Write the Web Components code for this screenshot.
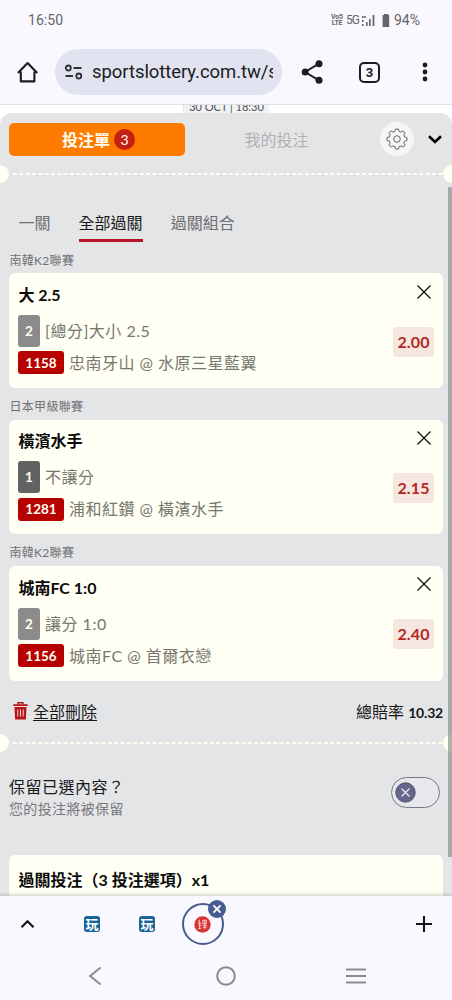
<!DOCTYPE html>
<html lang="zh-Hant">
<head>
<meta charset="utf-8">
<title>投注單</title>
<style>
html,body{margin:0;padding:0;height:1000px;overflow:hidden}
body{font-family:Lato,"Noto Sans CJK TC",sans-serif;background:#f9f8fe}
</style>
</head>
<body>
<phone-screen></phone-screen>
<script>
const define = (name, html) => customElements.define(name, class extends HTMLElement {
  constructor() {
    super();
    this.attachShadow({mode: 'open'}).innerHTML = '<style>*{box-sizing:border-box}svg{display:block;flex:none}</style>' + html;
  }
});

define('status-bar', `
<style>
:host{display:flex;height:40px;padding:0 32px 0 28px;align-items:center;justify-content:space-between;font:14px Roboto,sans-serif;color:#66656c}
.t{letter-spacing:.05px}
.r{display:flex;align-items:center}
.v{font-size:7px;line-height:6.5px;font-weight:700;width:12px;text-align:center;letter-spacing:-.2px}
.g{font-size:12px;margin-left:3px;width:14px;letter-spacing:-.9px}
.p{margin-left:4px;letter-spacing:0}
</style>
<span class="t">16:50</span>
<div class="r"><div class="v">Vo5<br>LTE</div><span class="g">5G</span>
<svg width="15" height="13" viewBox="0 0 15 13" style="margin-left:1px" fill="#66656c"><path d="M1 2h1.6v2H1zM3.2 2h1.6v2H3.2zM1 6h1.6v2H1zM1 10h1.6v2H1zM5 8h1.6v4H5zM8 5h1.7v7H8zM11.6 1h1.8v11h-1.8z"/></svg>
<svg width="8" height="13" viewBox="0 0 8 13" style="margin-left:6px" fill="#66656c"><path d="M2 0h4v1h1.2v12H.6V1H2z"/></svg>
<span class="p">94%</span></div>`);

define('address-bar', `
<style>
:host{display:flex;height:65px;align-items:center;border-bottom:1px solid #dedee3;padding:0 17px;color:#1b1b21}
.url{display:flex;align-items:center;width:227px;height:46px;border-radius:23px;background:#e2e3f1;margin-left:17px;padding-left:9px}
.txt{width:181px;overflow:hidden;white-space:nowrap;font:18.5px/30px Roboto,sans-serif;letter-spacing:-.07px;margin-left:8px}
.n{width:21px;height:21px;border:2px solid #1b1b21;border-radius:5px;font:700 13px/17px Roboto,sans-serif;text-align:center;margin-left:36px}
</style>
<svg width="21" height="22" viewBox="0 0 21 22" fill="none" stroke="#1b1b21" stroke-width="2.1" stroke-linejoin="round"><path d="M3.8 10.5V20.4H17.4V10.5M.9 12 10.6 2 20.3 12"/></svg>
<div class="url"><svg width="20" height="16" viewBox="0 0 20 16" fill="none" stroke="#303037" stroke-width="1.8"><circle cx="4.3" cy="4" r="2.5"/><path d="M9.5 4H17.5M1.5 12H9"/><circle cx="14.8" cy="12" r="2.5"/></svg><span class="txt">sportslottery.com.tw/s</span></div>
<svg width="22" height="24" viewBox="0 0 22 24" style="margin-left:19px" fill="#1b1b21"><path d="M4 12 18 3.7M4 12 18 20.3" stroke="#1b1b21" stroke-width="2"/><circle cx="4.2" cy="12" r="3.5"/><circle cx="18" cy="3.8" r="3.5"/><circle cx="18" cy="20.2" r="3.5"/></svg>
<div class="n">3</div>
<svg width="6" height="20" viewBox="0 0 6 20" style="margin-left:42px" fill="#1b1b21"><circle cx="3" cy="3" r="2.4"/><circle cx="3" cy="10" r="2.4"/><circle cx="3" cy="17" r="2.4"/></svg>`);

define('slip-header', `
<style>
:host{display:flex;height:52px;align-items:center;padding:0 9px}
.a{display:flex;align-items:center;justify-content:center;width:176px;height:33px;border-radius:5px;background:#ff7b00;color:#fffef5;font-weight:700;font-size:16px;padding-left:3px}
.b{width:21px;height:21px;border-radius:50%;background:#c42113;font-size:14px;font-weight:400;line-height:21px;text-align:center;margin-left:4px}
.m{width:183px;text-align:center;font-size:16px;color:#b0b1b3}
.g{display:grid;place-items:center;width:34px;height:34px;border-radius:50%;background:#f5f6f8;margin-left:12px}
</style>
<div class="a">投注單<span class="b">3</span></div><div class="m">我的投注</div>
<div class="g"><svg width="22" height="22" viewBox="-11 -11 22 22" fill="none" stroke="#65676a" stroke-width="1"><circle r="3.3"/><path stroke-linejoin="round" d="M-2-7.6-1.5-10H1.5L2-7.6 4-6.8 6.1-8.1 8.1-6.1 6.8-4 7.6-2 10-1.5V1.5L7.6 2 6.8 4 8.1 6.1 6.1 8.1 4 6.8 2 7.6 1.5 10H-1.5L-2 7.6-4 6.8-6.1 8.1-8.1 6.1-6.8 4-7.6 2-10 1.5V-1.5L-7.6-2-6.8-4-8.1-6.1-6.1-8.1-4-6.8Z"/></svg></div>
<svg width="14" height="9" viewBox="0 0 14 9" style="margin-left:14px" fill="none" stroke="#000" stroke-width="2.6"><path d="M1 1.3 7 7 13 1.3"/></svg>`);

define('ticket-divider', `
<style>
:host{display:flex;height:18px;align-items:center;overflow:hidden}
i{width:9px;height:18px;background:#fffff3;border-radius:0 9px 9px 0;flex:none}
i.r{border-radius:9px 0 0 9px}
svg{flex:1}
</style><i></i><svg width="434" height="2" viewBox="0 0 434 2"><path d="M3.8 1H434" stroke="#fffff3" stroke-width="2" stroke-dasharray="4 2.35"/></svg><i class="r"></i>`);

define('slip-tabs', `
<style>
:host{display:flex;height:57.6px;padding:19px 0 0 18.6px;gap:28px;font-size:16px;line-height:39px;color:#6c6e70}
::slotted(b){font-weight:400;color:#17181a;height:39px;border-bottom:3px solid #b51626}
</style><slot></slot>`);

define('bet-card', `
<style>
:host{display:block;height:146.35px;padding:0 9px}
.l{height:31.6px;padding:8px 0 0 .5px;font-size:12px;line-height:22.5px;letter-spacing:.3px;color:#707174}
.c{display:flex;justify-content:space-between;height:114.7px;background:#fffff3;border-radius:6px;padding:9.8px 9px 0 9.4px}
.t{font-size:16px;font-weight:700;line-height:24px;color:#0b0b0b}
.row{display:flex;align-items:center;color:#77766f;font-size:16px;letter-spacing:.5px;line-height:24px;margin-left:-.4px}
.a{height:32px;margin-top:8px}.b{height:23px;margin-top:4.4px}
.chip{display:flex;align-items:center;justify-content:center;font-weight:700;font-size:13.5px;letter-spacing:0;color:#fffff3;border-radius:3px;margin-right:5px}
.a .chip{width:22px;height:32px;background:var(--chip,#8b8b8b)}
.b .chip{width:46px;height:23px;background:#b70000}
.s{display:flex;flex-direction:column;align-items:flex-end}
.x{margin:1.6px 3px 0 0}
.o{width:41px;height:30px;border-radius:4px;background:#f6e6e0;color:#b32824;font-size:16px;font-weight:700;line-height:30px;text-align:center;margin-top:28px;letter-spacing:.1px}
</style>
<div class="l"><slot name="league"></slot></div>
<div class="c"><div><div class="t"><slot name="title"></slot></div>
<div class="row a"><span class="chip"><slot name="pick"></slot></span><slot name="market"></slot></div>
<div class="row b"><span class="chip"><slot name="code"></slot></span><slot name="match"></slot></div></div>
<div class="s"><svg class="x" width="14" height="14" viewBox="0 0 14 14" stroke="#111" stroke-width="1.3"><path d="M.5.5l13 13M13.5.5l-13 13"/></svg><span class="o"><slot name="odds"></slot></span></div></div>`);

define('slip-total', `
<style>
:host{display:flex;align-items:center;height:53.35px;padding:7px 9px 0 13px;font-size:16px;color:#17181a}
u{margin-left:5px;flex:1;text-decoration-thickness:1px;text-underline-offset:2px}
b{font-weight:700;font-size:14px;letter-spacing:-.2px}
</style>
<svg width="15" height="18" viewBox="0 0 15 18"><path d="M5 2.5V.8h5v1.7" fill="none" stroke="#b8151a" stroke-width="1.4"/><path d="M.3 2.3h14.4V4H.3zM1.5 5h12l-.6 12.5H2.1z" fill="#b8151a"/><path d="M4.8 7.5v7M7.5 7.5v7M10.2 7.5v7" stroke="#ecd9da" stroke-width="1"/></svg>
<u>全部刪除</u><span>總賠率 <b>10.32</b></span>`);

define('keep-row', `
<style>
:host{display:flex;justify-content:space-between;height:103px;padding:23px 12px 0 9px}
.a{font-size:16px;line-height:24px;letter-spacing:.5px;color:#17181a}
.b{font-size:14px;line-height:20px;letter-spacing:.35px;color:#77787b}
.s{display:flex;align-items:center;width:49px;height:31px;border:1px solid #777787;border-radius:16px;padding-left:3px;margin-top:2px;background:#e7e8ec}
</style><div><div class="a">保留已選內容？</div><div class="b">您的投注將被保留</div></div>
<div class="s"><svg width="21" height="21" viewBox="0 0 21 21"><circle cx="10.5" cy="10.5" r="9.7" fill="#66668a" stroke="#4f4f69"/><path d="M6.5 6.5l8 8M14.5 6.5l-8 8" stroke="#e9e9f2" stroke-width="1.2"/></svg></div>`);

define('stake-card', `
<style>:host{display:block;margin:0 9px;height:90px;background:#fffff3;border-radius:6px;padding:13px 9.5px;font-size:16px;line-height:24px;font-weight:700;color:#0b0b0b}</style><slot></slot>`);

define('page-view', `
<style>
:host{display:block;position:relative;height:791px;overflow:hidden;background:#fff}
.d{display:flex;height:8px;justify-content:center;overflow:hidden}
.d span{width:86px;height:8px;background:#f1f2f3;font:11px/14px Lato,sans-serif;color:#505357;text-align:center;border-left:1px solid #e4e4e4;white-space:nowrap}
.d em{display:block;font-style:normal;margin-top:-5px}
.p{height:790px;background:#e4e5e7;border-radius:12px 12px 0 0}
.bar{position:absolute;right:0;top:82px;width:4px;height:670px;background:rgba(145,145,145,.72)}
.sh{position:absolute;left:0;right:0;bottom:0;height:4px;background:linear-gradient(transparent,rgba(120,115,105,.25))}
.gap{height:1px}
</style>
<div class="d"><span><em>30 OCT | 18:30</em></span></div>
<div class="p">
<slip-header></slip-header><ticket-divider></ticket-divider>
<div class="gap"></div>
<slip-tabs><span>一關</span><b>全部過關</b><span>過關組合</span></slip-tabs>
<bet-card><span slot="league">南韓K2聯賽</span><span slot="title">大 2.5</span><span slot="pick">2</span><span slot="market">[總分]大小 2.5</span><span slot="code">1158</span><span slot="match">忠南牙山 @ 水原三星藍翼</span><span slot="odds">2.00</span></bet-card>
<bet-card style="--chip:#626262"><span slot="league">日本甲級聯賽</span><span slot="title">橫濱水手</span><span slot="pick">1</span><span slot="market">不讓分</span><span slot="code">1281</span><span slot="match">浦和紅鑽 @ 橫濱水手</span><span slot="odds">2.15</span></bet-card>
<bet-card><span slot="league">南韓K2聯賽</span><span slot="title">城南FC 1:0</span><span slot="pick">2</span><span slot="market">讓分 1:0</span><span slot="code">1156</span><span slot="match">城南FC @ 首爾衣戀</span><span slot="odds">2.40</span></bet-card>
<slip-total></slip-total><ticket-divider></ticket-divider><keep-row></keep-row>
<stake-card>過關投注（3 投注選項）x1</stake-card>
</div><div class="bar"></div><div class="sh"></div>`);

define('site-icon', `
<style>:host{display:flex;align-items:center;justify-content:center;width:16px;height:16px;border-radius:3px;background:#176597;color:#fff;font:700 13px/16px "Noto Sans CJK TC",sans-serif}</style><slot></slot>`);

define('tab-strip', `
<style>
:host{display:flex;height:56px;align-items:center;padding:0 19px 0 20px;background:#f9f8fe}
.c{position:relative;display:grid;place-items:center;width:42px;height:42px;border:2px solid #475b92;border-radius:50%;margin-left:26.5px}
.x{position:absolute;right:-4px;top:-5px}
.f{margin-left:49px}.f2{margin-left:39px}
</style>
<svg width="15" height="10" viewBox="0 0 15 10" fill="none" stroke="#17171c" stroke-width="2.2"><path d="M1.5 8.3 7.5 2.3 13.5 8.3"/></svg>
<site-icon class="f">玩</site-icon><site-icon class="f2">玩</site-icon>
<div class="c"><svg width="17" height="17" viewBox="0 0 17 17"><circle cx="8.5" cy="8.5" r="8.2" fill="#d9312f"/><path d="M4 5.2 6 3.8M3.8 7.2h3.6M4.4 9.4h3M4 12.6l3.4-.3M5.6 5v7M8.8 4.2h3.6v3.2H8.8zM8.6 9.2h4.6M8.8 11.2h4M10.8 4.2v9" fill="none" stroke="#ffd9d5" stroke-width=".9"/></svg>
<svg class="x" width="18" height="18" viewBox="0 0 18 18"><circle cx="9" cy="9" r="9" fill="#475b92"/><path d="M5.4 5.4l7.2 7.2M12.6 5.4l-7.2 7.2" stroke="#fff" stroke-width="1.9"/></svg></div>
<svg width="18" height="18" viewBox="0 0 18 18" style="margin-left:auto" stroke="#17171c" stroke-width="2.1"><path d="M9 1v16M1 9h16"/></svg>`);

define('system-nav', `
<style>:host{display:flex;height:48px;align-items:center;padding:0 85px 0 88px;background:#f9f8fe}.h{margin-left:114px}.m{margin-left:auto}</style>
<svg width="14" height="20" viewBox="0 0 14 20" fill="none" stroke="#8b8a91" stroke-width="2"><path d="M12.5 1.5 2.2 10l10.3 8.5"/></svg>
<svg class="h" width="20" height="20" viewBox="0 0 20 20" fill="none" stroke="#8b8a91" stroke-width="2"><circle cx="10" cy="10" r="8.8"/></svg>
<svg class="m" width="22" height="18" viewBox="0 0 22 18" stroke="#8b8a91" stroke-width="2"><path d="M1 2.5h20M1 9h20M1 15.5h20"/></svg>`);

define('phone-screen', `
<style>:host{display:block;width:452px;height:1000px;overflow:hidden;background:#f9f8fe}</style>
<status-bar></status-bar><address-bar></address-bar><page-view></page-view><tab-strip></tab-strip><system-nav></system-nav>`);
</script>
</body>
</html>
